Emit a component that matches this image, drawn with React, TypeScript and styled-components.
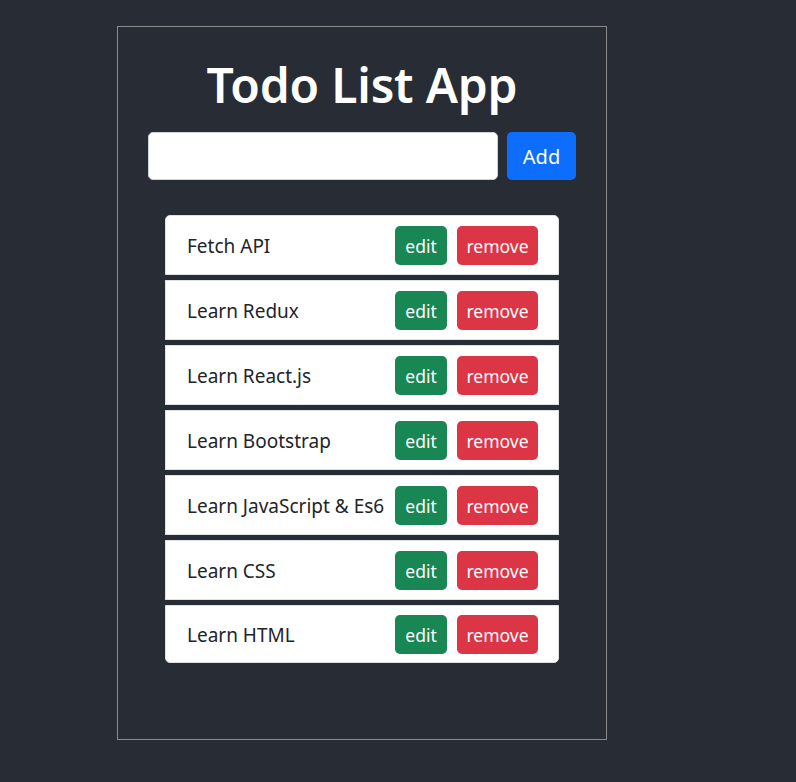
import styled, { createGlobalStyle } from "styled-components";

const GlobalStyle = createGlobalStyle`
  * {
    box-sizing: border-box;
  }
  body {
    margin: 0;
    background: #282c34;
    font-family: "Noto Sans", "Open Sans", sans-serif;
  }
`;

const Page = styled.div`
  min-height: 782px;
  padding: 26px 0 0 117px;
`;

const Card = styled.div`
  width: 490px;
  height: 714px;
  border: 1px solid #8a8a8a;
  display: flex;
  flex-direction: column;
  align-items: center;
`;

const Title = styled.h1`
  margin: 28px 0 0;
  color: #ffffff;
  font-size: 48px;
  font-weight: 600;
  line-height: 60px;
  letter-spacing: -0.2px;
`;

const Form = styled.form`
  display: flex;
  gap: 9px;
  margin: 17px 0 0 30px;
  width: 428px;
  align-self: flex-start;
`;

const Input = styled.input`
  flex: 1;
  height: 48px;
  border: 1px solid #ced4da;
  border-radius: 5px;
  background: #fff;
  padding: 8px 16px;
  font-size: 20px;
  outline: none;
`;

const Button = styled.button<{ $variant: "primary" | "success" | "danger" }>`
  border: none;
  border-radius: 5px;
  color: #fff;
  font-family: inherit;
  cursor: pointer;
  padding: 0;
  background: ${(p) =>
    p.$variant === "primary"
      ? "#0d6efd"
      : p.$variant === "success"
      ? "#198754"
      : "#dc3545"};
`;

const AddButton = styled(Button)`
  width: 69px;
  height: 48px;
  font-size: 20px;
`;

const List = styled.ul`
  list-style: none;
  margin: 35px 0 0 47px;
  padding: 0;
  width: 394px;
  align-self: flex-start;
  display: flex;
  flex-direction: column;
  gap: 5px;
`;

const Item = styled.li`
  height: 60px;
  background: #fff;
  border: 1px solid #dee2e6;
  display: flex;
  align-items: center;
  padding: 1px 20px 0 21px;
  color: #212529;
  font-size: 19px;

  &:first-child {
    border-radius: 5px 5px 0 0;
  }
  &:last-child {
    height: 58px;
    border-radius: 0 0 5px 5px;
  }
`;

const ItemText = styled.span`
  flex: 1;
`;

const Actions = styled.div`
  display: flex;
  gap: 10px;
`;

const SmallButton = styled(Button)<{ $w: number }>`
  width: ${(p) => p.$w}px;
  height: 39px;
  font-size: 17.5px;
`;

const todos = [
  "Fetch API",
  "Learn Redux",
  "Learn React.js",
  "Learn Bootstrap",
  "Learn JavaScript & Es6",
  "Learn CSS",
  "Learn HTML",
];

export default function App() {
  return (
    <Page>
      <GlobalStyle />
      <Card>
        <Title>Todo List App</Title>
        <Form onSubmit={(e) => e.preventDefault()}>
          <Input type="text" />
          <AddButton $variant="primary" type="submit">
            Add
          </AddButton>
        </Form>
        <List>
          {todos.map((t) => (
            <Item key={t}>
              <ItemText>{t}</ItemText>
              <Actions>
                <SmallButton $variant="success" $w={52}>
                  edit
                </SmallButton>
                <SmallButton $variant="danger" $w={81}>
                  remove
                </SmallButton>
              </Actions>
            </Item>
          ))}
        </List>
      </Card>
    </Page>
  );
}
